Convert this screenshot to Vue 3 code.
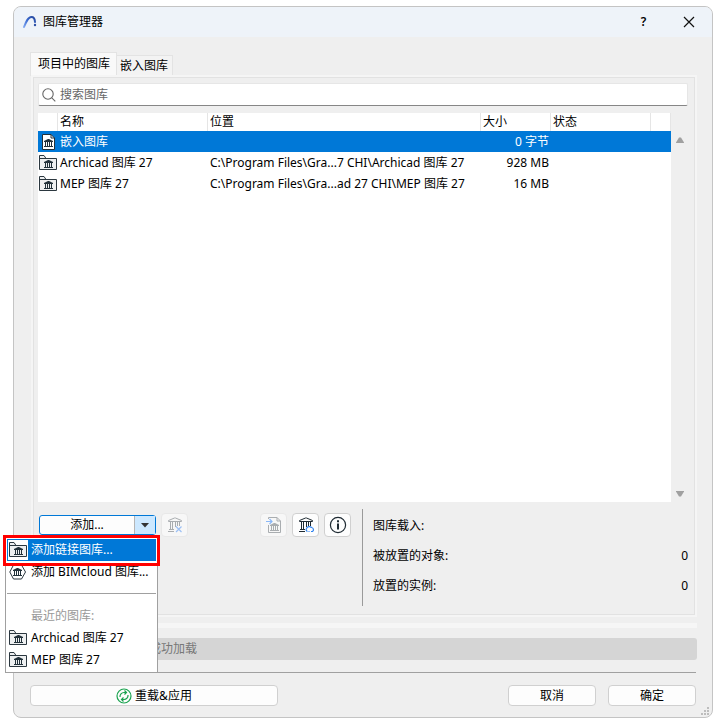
<script setup>
import { ref } from 'vue'

const query = ref('')

const libraries = [
  { icon: 'file', name: '嵌入图库', path: '', size: '0 字节', selected: true },
  { icon: 'folder', name: 'Archicad 图库 27', path: 'C:\\Program Files\\Gra...7 CHI\\Archicad 图库 27', size: '928 MB' },
  { icon: 'folder', name: 'MEP 图库 27', path: 'C:\\Program Files\\Gra...ad 27 CHI\\MEP 图库 27', size: '16 MB' },
]

const stats = [
  { label: '图库载入:', value: '' },
  { label: '被放置的对象:', value: '0' },
  { label: '放置的实例:', value: '0' },
]

const menu = [
  { kind: 'item', icon: 'folder', text: '添加链接图库...', active: true },
  { kind: 'item', icon: 'cloud', text: '添加 BIMcloud 图库...' },
  { kind: 'line' },
  { kind: 'title', text: '最近的图库:' },
  { kind: 'item', icon: 'folder', text: 'Archicad 图库 27' },
  { kind: 'item', icon: 'folder', text: 'MEP 图库 27' },
]

const temple = 'M0 3V2L4 0H5L9 2V3ZM1 3h1v4H1zM3 3h1v4H3zM5 3h1v4H5zM7 3h1v4H7zM0 7h9v1H0z'
const bigTemple = 'M2.500 5.500V4.500L8.500 2H9.500L15.500 4.500V5.500ZM4.500 6v7M6.500 6v7M9.500 6v5M11.500 6v4M13.500 6v4M3 13.500H8M2 15.500H8'
</script>

<template>
  <main class="desk">
    <section class="dialog" aria-labelledby="dialog-title">
      <header class="titlebar">
        <svg class="logo" width="14" height="14" viewBox="0 0 14 14">
          <defs>
            <linearGradient id="arc" x1="0" y1="1" x2="1" y2="0">
              <stop offset="0" stop-color="#7fa6f0" />
              <stop offset=".5" stop-color="#3a6ad0" />
              <stop offset="1" stop-color="#25479c" />
            </linearGradient>
          </defs>
          <path d="M1 12C3 7 5 2 8.500 2C10.800 2 11.800 4 12 7" fill="none" stroke="url(#arc)" stroke-width="2" stroke-linecap="round" />
          <circle cx="12" cy="10" r="1.200" fill="#2d4fa5" />
        </svg>
        <h1 id="dialog-title">图库管理器</h1>
        <button class="caption" type="button" aria-label="?">?</button>
        <button class="caption" type="button" aria-label="×">
          <svg width="12" height="12" viewBox="0 0 12 12"><path d="M1 1L11 11M11 1L1 11" stroke="#111" stroke-width="1.200" /></svg>
        </button>
      </header>

      <div class="content">
        <nav class="tabs" role="tablist">
          <button class="tab current" type="button" role="tab" aria-selected="true">项目中的图库</button>
          <button class="tab" type="button" role="tab" aria-selected="false">嵌入图库</button>
        </nav>

        <div class="pane">
          <label class="search">
            <svg width="14" height="14" viewBox="0 0 14 14" fill="none" stroke="#666" stroke-width="1.100">
              <circle cx="6" cy="6" r="5.200" /><path d="M9.800 9.800L13.300 13.300" />
            </svg>
            <input v-model="query" type="text" placeholder="搜索图库" aria-label="搜索图库" />
          </label>

          <div class="list">
            <div class="sheet">
              <table>
                <colgroup>
                  <col class="c-icon" /><col class="c-name" /><col class="c-path" /><col class="c-size" /><col class="c-state" /><col />
                </colgroup>
                <thead>
                  <tr><th></th><th>名称</th><th>位置</th><th>大小</th><th>状态</th><th></th></tr>
                </thead>
                <tbody>
                  <tr v-for="lib in libraries" :key="lib.name" :class="{ selected: lib.selected }">
                    <td class="pic">
                      <svg v-if="lib.icon === 'file'" width="18" height="16" viewBox="0 0 18 16">
                        <path d="M3.500 .5H12L15.500 4V15.500H3.500Z" fill="#fff" stroke="#22313a" />
                        <path d="M12 .5V4H15.500" fill="none" stroke="#22313a" />
                        <path :d="temple" transform="translate(5 5)" fill="#22313a" />
                      </svg>
                      <svg v-else width="18" height="16" viewBox="0 0 18 16">
                        <path d="M.5 14.500V.5H5L7 3.500H17.500V14.500Z" fill="#eef0f1" stroke="#2b373f" />
                        <path d="M.5 3.500H7" stroke="#2b373f" />
                        <path :d="temple" transform="translate(5 5)" fill="#22313a" />
                      </svg>
                    </td>
                    <td>{{ lib.name }}</td>
                    <td>{{ lib.path }}</td>
                    <td class="num">{{ lib.size }}</td>
                    <td></td>
                    <td></td>
                  </tr>
                </tbody>
              </table>
            </div>
            <div class="scroller">
              <svg width="10" height="8" viewBox="0 0 10 8"><path d="M1 6.500L4 1.500H6L9 6.500V7H1Z" fill="#a0a0a0" /></svg>
              <svg width="10" height="8" viewBox="0 0 10 8"><path d="M1 1.500L4 6.500H6L9 1.500V1H1Z" fill="#a0a0a0" /></svg>
            </div>
          </div>

          <div class="lower">
            <div class="tools">
              <div class="split">
                <button class="add" type="button">添加...</button>
                <button class="drop" type="button" aria-label="添加" aria-expanded="true">
                  <svg width="8" height="5" viewBox="0 0 8 5"><path d="M0 0H8L4 4.500Z" fill="#333" /></svg>
                </button>
                <div class="menu" role="menu">
                  <template v-for="(entry, i) in menu" :key="i">
                    <hr v-if="entry.kind === 'line'" />
                    <div v-else-if="entry.kind === 'title'" class="entry muted">{{ entry.text }}</div>
                    <button v-else class="entry" :class="{ active: entry.active }" type="button" role="menuitem">
                      <span class="entry-icon">
                        <svg v-if="entry.icon === 'folder'" width="18" height="16" viewBox="0 0 18 16">
                          <path d="M.5 14.500V.5H5L7 3.500H17.500V14.500Z" fill="#eef0f1" stroke="#2b373f" />
                          <path d="M.5 3.500H7" stroke="#2b373f" />
                          <path :d="temple" transform="translate(5 5)" fill="#22313a" />
                        </svg>
                        <svg v-else width="18" height="16" viewBox="0 0 18 16">
                          <path d="M4.500 1H12.500L16.500 8L12.500 15H4.500L.8 8Z" fill="#fff" stroke="#2b373f" />
                          <path :d="temple" transform="translate(4 4)" fill="#22313a" />
                        </svg>
                      </span>
                      {{ entry.text }}
                    </button>
                  </template>
                  <div class="marker"></div>
                </div>
              </div>

              <button class="tool" type="button" aria-label="×" disabled>
                <svg width="18" height="18" viewBox="0 0 18 18" fill="none" stroke="#a9adb0">
                  <path :d="bigTemple" />
                  <path d="M10 10.500L15.500 16M15.500 10.500L10 16" stroke="#9cc0f5" stroke-width="1.200" />
                </svg>
              </button>
              <span class="gap"></span>
              <button class="tool" type="button" aria-label="→" disabled>
                <svg width="18" height="18" viewBox="0 0 18 18" fill="none" stroke="#a9adb0">
                  <path d="M3.500 3V1.500H12L15.500 5V16.500H3.500V9M12 1.500V5H15.500" />
                  <path d="M1 5.500H7M4.500 3L7 5.500L4.500 8" stroke="#8ab8f8" stroke-width="1.200" />
                  <path :d="temple" transform="translate(5 7)" fill="#a9adb0" stroke="none" />
                </svg>
              </button>
              <button class="tool" type="button" aria-label="↻">
                <svg width="18" height="18" viewBox="0 0 18 18" fill="none" stroke="#1f2b33">
                  <path :d="bigTemple" />
                  <path d="M10.500 15.500A2 2 0 0 1 9.500 12.500A3 3 0 0 1 14.500 11.500A2.200 2.200 0 0 1 15.500 15.500H14M12.500 15.500H11.500" stroke="#2f83f0" stroke-width="1.200" />
                </svg>
              </button>
              <button class="tool" type="button" aria-label="i">
                <svg width="18" height="18" viewBox="0 0 18 18" fill="none" stroke="#1f2b33">
                  <circle cx="9" cy="9" r="7.600" stroke-width="1.200" />
                  <path d="M9 7.500V13.500M9 4.200V6.200" stroke-width="2" />
                </svg>
              </button>
            </div>

            <dl class="stats">
              <div v-for="s in stats" :key="s.label"><dt>{{ s.label }}</dt><dd>{{ s.value }}</dd></div>
            </dl>
          </div>
        </div>

        <div class="strip"></div>
        <div class="status" role="status">成功加载</div>

        <footer>
          <button class="push wide" type="button">
            <svg width="16" height="16" viewBox="0 0 16 16" fill="none" stroke="#1aa34f" stroke-width="1.200">
              <circle cx="8" cy="8" r="7" />
              <path d="M4 9A4 4 0 0 1 8 4.500H10.500M8.500 2.500L10.500 4.500L8.500 6.500M12 7A4 4 0 0 1 8 11.500H5.500M7.500 9.500L5.500 11.500L7.500 13.500" />
            </svg>
            重载&amp;应用
          </button>
          <span class="gap"></span>
          <button class="push" type="button">取消</button>
          <button class="push" type="button">确定</button>
        </footer>
      </div>

      <svg class="grip" width="8" height="8" viewBox="0 0 8 8" fill="#bdbdbd">
        <path d="M6 0h2v2H6zM3 3h2v2H3zM6 3h2v2H6zM0 6h2v2H0zM3 6h2v2H3zM6 6h2v2H6z" />
      </svg>
    </section>
  </main>
</template>

<style>
body {
  background: #fff;
}
</style>

<style scoped>
.desk {
  box-sizing: border-box;
  display: flex;
  min-height: 100vh;
  padding: 6px 5px 5px 13px;
  font: 12px/18px "Noto Sans", "Noto Sans CJK SC", sans-serif;
  color: #000;
}
.desk * {
  box-sizing: border-box;
}
button,
input {
  margin: 0;
  padding: 0;
  border: 0;
  background: none;
  font: inherit;
  color: inherit;
}
svg {
  display: block;
  flex: none;
}
.gap {
  flex: 1;
}
.dialog {
  position: relative;
  display: flex;
  flex: 1;
  flex-direction: column;
  border: 1px solid #c4c4c4;
  border-radius: 8px;
  background: #efefef;
}
.titlebar {
  display: flex;
  align-items: center;
  height: 30px;
  padding: 0 1px 0 9px;
  border-radius: 7px 7px 0 0;
  background: #eef3f9;
}
h1 {
  flex: 1;
  margin: 0 0 0 6px;
  font: inherit;
}
.caption {
  display: flex;
  align-items: center;
  justify-content: center;
  width: 45px;
  height: 30px;
  font-weight: 600;
}
.content {
  display: flex;
  flex: 1;
  flex-direction: column;
  padding: 15px 15px 11px 16px;
}
.tabs {
  display: flex;
  align-items: flex-end;
  height: 24px;
}
.tab {
  height: 21px;
  padding: 0 4px 0 3px;
  border: 1px solid #e3e3e3;
  border-bottom: 0;
  border-left: 0;
  background: #f3f3f3;
}
.current {
  height: 24px;
  padding: 0 6px 2px 7px;
  border-left: 1px solid #e3e3e3;
  background: #f9f9f9;
}
.pane {
  display: flex;
  flex: 1;
  flex-direction: column;
  margin: 1px 2px 3px 3px;
  padding: 5px 6px 8px 4px;
  border: 1px solid #e2e2e2;
  box-shadow: 0 0 0 2px #f5f5f5;
}
.search {
  display: flex;
  align-items: center;
  gap: 4px;
  height: 23px;
  padding-left: 3px;
  border: 1px solid #e6e6e6;
  border-bottom-color: #868686;
  border-radius: 2px;
  background: #fff;
}
.search input {
  flex: 1;
  min-width: 0;
  outline: 0;
}
.search input::placeholder {
  color: #666;
  opacity: 1;
}
.list {
  display: flex;
  flex: 1;
  margin-top: 7px;
}
.sheet {
  flex: 1;
  background: #fff;
}
table {
  width: 100%;
  border-collapse: separate;
  border-spacing: 0;
  table-layout: fixed;
}
.c-icon { width: 20px; }
.c-name { width: 150px; }
.c-path { width: 273px; }
.c-size { width: 70px; }
.c-state { width: 100px; }
th,
td {
  height: 21px;
  padding: 0 2px;
  font-weight: 400;
  text-align: left;
  white-space: nowrap;
}
th {
  height: 18px;
  padding-bottom: 0;
  line-height: 18px;
  border-right: 1px solid #e5e5e5;
}
.pic {
  padding: 0 0 0 1px;
}
.num {
  text-align: right;
}
.selected {
  background: #0078d7;
  color: #fff;
}
.scroller {
  display: flex;
  flex-direction: column;
  align-items: center;
  justify-content: space-between;
  width: 17px;
  padding: 23px 0 4px;
}
.lower {
  display: flex;
  gap: 11px;
  height: 97px;
  margin-top: 7px;
}
.tools {
  display: flex;
  align-items: center;
  gap: 5px;
  width: 312px;
  height: 24px;
  margin: 4px 0 0 1px;
}
.split {
  position: relative;
  display: flex;
  width: 117px;
  height: 20px;
  border: 1px solid #0078d7;
  border-radius: 3px;
  background: #fdfdfd;
}
.add {
  flex: 1;
  border-right: 1px solid #b5b5b5;
}
.drop {
  display: flex;
  align-items: center;
  justify-content: center;
  width: 20px;
  background: #cce8ff;
}
.tool {
  display: flex;
  align-items: center;
  justify-content: center;
  width: 27px;
  height: 24px;
  border: 1px solid #d0d0d0;
  border-radius: 4px;
  background: #fdfdfd;
}
.tool:disabled {
  border-color: #e8e8e8;
  background: #f7f7f7;
}
.stats {
  display: flex;
  flex: 1;
  flex-direction: column;
  gap: 12px;
  margin: 0;
  padding: 8px 0 0 10px;
  border-left: 1px solid #9a9a9a;
}
.stats div {
  display: flex;
  justify-content: space-between;
}
.stats dd {
  margin: 0;
}
.menu {
  position: absolute;
  top: 20px;
  left: -35px;
  z-index: 2;
  width: 153px;
  padding: 2px 1px 1px;
  border: 1px solid #a0a0a0;
  background: #fff;
}
.entry {
  display: flex;
  align-items: center;
  gap: 3px;
  width: 100%;
  height: 22px;
  padding-left: 1px;
  white-space: nowrap;
}
.entry-icon {
  display: flex;
  align-items: center;
  width: 20px;
  height: 20px;
  padding-left: 1px;
}
.active {
  background: #0078d7;
  color: #fff;
}
.active .entry-icon {
  background: #fff;
}
.muted {
  padding-left: 24px;
  color: #999;
}
hr {
  height: 1px;
  margin: 10px 0 11px;
  border: 0;
  background: #a0a0a0;
}
.marker {
  position: absolute;
  top: -2px;
  left: -3px;
  width: 157px;
  height: 31px;
  border: 3px solid #f00;
  pointer-events: none;
}
.strip {
  height: 5px;
  margin-top: 5px;
  background: #f6f6f6;
}
.status {
  height: 22px;
  margin-top: 10px;
  padding: 2px 0 2px 119px;
  border-radius: 3px;
  background: #d5d5d5;
  color: #777;
}
footer {
  display: flex;
  gap: 12px;
  margin: 12px 1px 0 0;
  padding-top: 12px;
  border-top: 1px solid #a0a0a0;
}
.push {
  display: flex;
  align-items: center;
  justify-content: center;
  gap: 3px;
  width: 88px;
  height: 21px;
  border: 1px solid #d0d0d0;
  border-radius: 4px;
  background: #fdfdfd;
}
.wide {
  width: 248px;
}
.grip {
  position: absolute;
  right: 3px;
  bottom: 2px;
}
</style>
